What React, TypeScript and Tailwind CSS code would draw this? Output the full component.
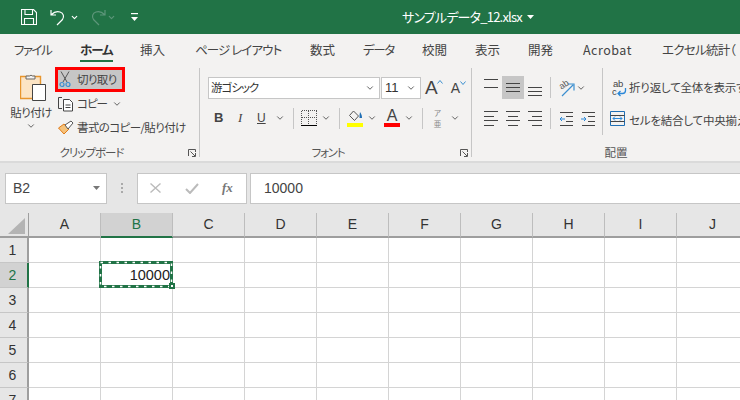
import { ChevronDown } from "lucide-react";

const TABS = [
  { label: "ファイル", cls: "ml-[14px] w-[37px] tracking-[-1.5px]" },
  { label: "ホーム", cls: "ml-[29px] w-[33px] tracking-[-1px]", active: true },
  { label: "挿入", cls: "ml-[27px] w-[25px]" },
  { label: "ページ レイアウト", cls: "ml-[30px] w-[85px] tracking-[-0.9px]" },
  { label: "数式", cls: "ml-[30px] w-[26px]" },
  { label: "データ", cls: "ml-[27px] w-[31px] tracking-[-1.300px]" },
  { label: "校閲", cls: "ml-[28px] w-[25px]" },
  { label: "表示", cls: "ml-[28px] w-[26px]" },
  { label: "開発", cls: "ml-[27px] w-[26px]" },
  { label: "Acrobat", cls: "ml-[29px] w-[50px] tracking-[0.5px]" },
  { label: "エクセル統計（", cls: "ml-[29px] tracking-[-0.7px]" },
];

const COLUMNS = ["A", "B", "C", "D", "E", "F", "G", "H", "I", "J"];
const ROWS = [1, 2, 3, 4, 5, 6, 7];

function Caret({ className = "" }: { className?: string }) {
  return <ChevronDown className={`h-[10px] w-[10px] shrink-0 text-[#444] ${className}`} strokeWidth={2} />;
}

function TitleBar() {
  return (
    <div className="flex h-[34px] items-center bg-[#217346] text-white">
      <svg className="ml-[21px] h-[16px] w-[16px]" viewBox="0 0 16 16" fill="none" stroke="white" strokeWidth="1.1">
        <path d="M.5.500h12l3 3v12H.500z" />
        <path d="M4 .500v5h7.500v-5M3.500 15.500v-6h9v6" />
      </svg>
      <svg className="ml-[13px] h-[17px] w-[16px]" viewBox="0 0 16 17" fill="none" stroke="white" strokeWidth="1.200">
        <path d="M1 1v5h5M1.500 5.500C4 3 7 2 10 3c3.500 1.200 4.500 4.500 2.500 7.500L7 16" />
      </svg>
      <ChevronDown className="ml-[4px] h-[9px] w-[9px]" strokeWidth={3} />
      <svg className="ml-[11px] h-[17px] w-[16px]" viewBox="0 0 16 17" fill="none" stroke="#5d967a" strokeWidth="1.200">
        <path d="M15 1v5h-5M14.500 5.500C12 3 9 2 6 3 2.500 4.200 1.500 7.500 3.500 10.500L9 16" />
      </svg>
      <ChevronDown className="ml-[1px] h-[9px] w-[9px] text-[#5d967a]" strokeWidth={3} />
      <svg className="ml-[14px] h-[10px] w-[9px]" viewBox="0 0 9 10" fill="white">
        <rect x="1" y="1" width="7" height="1.200" />
        <path d="M1 5h7L4.500 9z" />
      </svg>
      <div className="ml-[263px] flex items-center text-[13px] tracking-[-0.8px] [font-feature-settings:'palt']">
        <span>サンプルデータ_12.xlsx</span>
        <svg className="ml-[5px] h-[4px] w-[7px]" viewBox="0 0 7 4" fill="white">
          <path d="M0 0h7L3.500 4z" />
        </svg>
      </div>
    </div>
  );
}

function TabBar() {
  return (
    <div className="flex h-[34px] items-start overflow-hidden whitespace-nowrap pt-[6px] text-[12.5px] leading-[20px] text-[#444]">
      {TABS.map((tab) => (
        <div key={tab.label} className={`${tab.cls} relative h-[22px] shrink-0 ${tab.active ? "font-bold text-[#333]" : ""}`}>
          <span>{tab.label}</span>
          {tab.active && <div className="absolute bottom-0 left-0 right-0 h-[2px] bg-[#217346]" />}
        </div>
      ))}
    </div>
  );
}

function Launcher() {
  return (
    <svg className="h-[8px] w-[8px]" viewBox="0 0 8 8" fill="none" stroke="#555" strokeWidth="1">
      <path d="M.5 7V.5H7.5V3M2.500 2.500 7 7M7.500 4v3.500H4" />
    </svg>
  );
}

function GroupLabel({ text, className = "", launcher = true }: { text: string; className?: string; launcher?: boolean }) {
  return (
    <div className={`relative mt-auto flex h-[10px] items-center justify-center text-[11.5px] leading-[10px] text-[#555] ${className}`}>
      {text}
      {launcher && (
        <span className="absolute bottom-0 right-[3px] flex">
          <Launcher />
        </span>
      )}
    </div>
  );
}

function ClipboardGroup() {
  return (
    <div className="flex h-[89px] w-[200px] shrink-0 flex-col border-r border-[#c6c6c6]">
      <div className="flex">
        <div className="flex w-[55px] flex-col items-center pl-[7px] pt-[4px] text-[11.5px] text-[#444]">
          <svg className="ml-[4px] h-[30px] w-[26px]" viewBox="0 0 26 30" fill="none">
            <path d="M.5 4.500h20v22H.500z" fill="#fce4c4" stroke="#e8952c" strokeWidth="1.400" />
            <path d="M6 7V4h3.500a2 2 0 0 1 3 0H15v3z" fill="#f3f2f1" stroke="#666" />
            <path d="M12.500 12.500h13v16h-13z" fill="white" stroke="#444" />
          </svg>
          <span className="mt-[3px] leading-[14px] tracking-[-0.6px]">貼り付け</span>
          <Caret className="mt-[2px]" />
        </div>
        <div className="-mt-[1px] flex flex-col">
          <div className="flex h-[25px] w-[70px] items-center border-[3px] border-[#ff0000] bg-[#c6c6c6] pl-[1px] text-[11.5px] text-[#444]">
            <svg className="h-[17px] w-[12px]" viewBox="0 0 12 17" fill="none" stroke="#555" strokeWidth="1">
              <path d="M2 .5 8 11M10 .5 4 11" />
              <circle cx="3" cy="13.500" r="2" stroke="#3b8fd0" strokeWidth="1.200" />
              <circle cx="9" cy="13.500" r="2" stroke="#3b8fd0" strokeWidth="1.200" />
            </svg>
            <span className="ml-[6px] whitespace-nowrap tracking-[-0.6px]">切り取り</span>
          </div>
          <div className="flex h-[24px] items-center pl-[3px] text-[11.5px] text-[#444]">
            <svg className="h-[16px] w-[16px]" viewBox="0 0 16 16" fill="none" stroke="#444">
              <path d="M4 1.500H.5v11H4" />
              <path d="M5.500 3.500h6l3 3v8.500h-9z" fill="white" />
              <path d="M7.500 9h5M7.500 11.500h5" />
            </svg>
            <span className="ml-[3px] w-[35px] tracking-[-1px]">コピー</span>
            <Caret />
          </div>
          <div className="flex h-[24px] items-center whitespace-nowrap pl-[3px] text-[11.5px] text-[#444]">
            <svg className="h-[16px] w-[16px] shrink-0" viewBox="0 0 16 16" fill="none">
              <path d="M.5 8 6 4l5 5-5 5z" fill="#f5c27a" stroke="#e07b1a" />
              <path d="m7 5 6-4 2 2-5 6z" fill="#fff" stroke="#555" />
            </svg>
            <span className="ml-[3px] tracking-[-0.6px]">書式のコピー/貼り付け</span>
          </div>
        </div>
      </div>
      <GroupLabel text="クリップボード" className="pr-[16px] tracking-[-1px]" />
    </div>
  );
}

function FontGroup() {
  return (
    <div className="flex h-[89px] w-[272px] shrink-0 flex-col border-r border-[#c6c6c6] pl-[8px]">
      <div className="mt-[9px] flex h-[22px] items-center">
        <div className="flex h-[22px] w-[172px] items-center justify-between border border-[#c6c6c6] bg-white pl-[2px] pr-[4px] text-[11.5px] text-[#333]">
          <span className="tracking-[-1px]">游ゴシック</span>
          <Caret />
        </div>
        <div className="ml-[1px] flex h-[22px] w-[40px] items-center justify-between border border-[#c6c6c6] bg-white pl-[3px] pr-[4px] font-['Liberation_Sans'] text-[13px] text-[#333]">
          <span>11</span>
          <Caret />
        </div>
        <div className="ml-[4px] flex items-start font-['Liberation_Sans'] text-[#444]">
          <span className="text-[19px] leading-[22px]">A</span>
          <svg className="-ml-[1px] mt-[3px] h-[4px] w-[6px]" viewBox="0 0 6 4" fill="none" stroke="#3b8fd0">
            <path d="m.5 3.500 2.500-3 2.500 3" />
          </svg>
          <span className="ml-[8px] text-[14px] leading-[22px]">A</span>
          <svg className="mt-[4px] h-[4px] w-[6px]" viewBox="0 0 6 4" fill="none" stroke="#3b8fd0">
            <path d="m.5.500 2.500 3 2.500-3" />
          </svg>
        </div>
      </div>
      <div className="mt-[8px] flex h-[22px] items-center text-[#444]">
        <span className="ml-[6px] w-[12px] font-['Liberation_Sans'] text-[13px] font-bold">B</span>
        <span className="ml-[12px] w-[10px] font-['Liberation_Serif'] text-[13px] italic">I</span>
        <span className="ml-[9px] w-[11px] font-['Liberation_Sans'] text-[12px] underline">U</span>
        <Caret className="ml-[7px]" />
        <div className="ml-[8px] h-[21px] w-px bg-[#c6c6c6]" />
        <svg className="ml-[7px] h-[16px] w-[16px]" viewBox="0 0 16 16" fill="none" stroke="#555" strokeDasharray="1 1" shapeRendering="crispEdges">
          <path d="M.5.500h15M.5 7.500h15M.5.500v15M15.500.500v15M7.500 .500v15" />
          <path d="M0 15.500h16" stroke="#000" strokeDasharray="none" />
        </svg>
        <Caret className="ml-[4px]" />
        <div className="ml-[8px] h-[21px] w-px bg-[#c6c6c6]" />
        <div className="ml-[7px] flex w-[16px] flex-col items-center">
          <svg className="h-[12px] w-[15px]" viewBox="0 0 15 12" fill="none">
            <path d="m5.500 1 5 5-4 4.500-5-5z" stroke="#555" />
            <path d="M12 2c1.500 2 2 4 2 6h-2.500c0-2 0-4 .5-6z" fill="#1f6fb5" />
          </svg>
          <div className="mt-[1px] h-[4px] w-[16px] bg-[#ffff00]" />
        </div>
        <Caret className="ml-[4px]" />
        <div className="ml-[7px] flex w-[16px] flex-col items-center">
          <span className="h-[12px] font-['Liberation_Sans'] text-[16px] leading-[12px]">A</span>
          <div className="mt-[1px] h-[4px] w-[16px] bg-[#ff0000]" />
        </div>
        <Caret className="ml-[4px]" />
        <div className="ml-[8px] h-[21px] w-px bg-[#c6c6c6]" />
        <div className="ml-[10px] flex w-[9px] flex-col items-center text-[7.500px] leading-[11px] text-[#888]">
          <span>ア</span>
          <span>亜</span>
        </div>
        <Caret className="ml-[8px]" />
      </div>
      <GroupLabel text="フォント" className="pr-[23px] tracking-[-1.200px]" />
    </div>
  );
}

function Lines({
  widths,
  active = false,
  className = "",
  align = "items-center",
}: {
  widths: number[];
  active?: boolean;
  className?: string;
  align?: string;
}) {
  return (
    <div className={`flex h-[23px] w-[22px] flex-col px-[4px] ${align} ${active ? "bg-[#c6c6c6]" : ""} ${className}`}>
      {widths.map((w, i) => (
        <div key={i} className="h-px shrink-0 bg-[#444]" style={{ width: w }} />
      ))}
    </div>
  );
}

function AlignGroup() {
  return (
    <div className="flex h-[89px] w-[288px] shrink-0 flex-col">
      <div className="flex h-[67px] shrink-0">
        <div className="flex w-[131px] shrink-0 flex-col border-r border-[#c6c6c6]">
          <div className="mt-[8px] flex h-[23px] items-center">
            <div className="flex w-[78px] shrink-0 pl-[8px]">
              <Lines widths={[14, 14]} className="justify-start gap-[7px] pt-[3px]" />
              <Lines widths={[14, 14, 14]} active className="justify-center gap-[3px]" />
              <Lines widths={[14, 14, 14]} className="justify-end gap-[3px] pb-[3px]" />
            </div>
            <div className="h-[21px] w-px bg-[#c6c6c6]" />
            <svg className="ml-[7px] h-[18px] w-[17px]" viewBox="0 0 17 18" fill="none">
              <path d="M4 17 15 6M9.500 5H16v6.500" stroke="#3b8fd0" strokeWidth="1.200" />
              <text x="1" y="9" fontSize="9" fill="#555" fontFamily="Liberation Sans" transform="rotate(-35 5 6)">
                ab
              </text>
            </svg>
            <Caret className="ml-[1px]" />
          </div>
          <div className="mt-[8px] flex h-[23px] items-center">
            <div className="flex w-[78px] shrink-0 pl-[8px]">
              <Lines widths={[14, 10, 14, 10]} align="items-start" className="justify-center gap-[3.500px]" />
              <Lines widths={[14, 10, 14, 10]} className="justify-center gap-[3.500px]" />
              <Lines widths={[14, 10, 14, 10]} align="items-end" className="justify-center gap-[3.500px]" />
            </div>
            <div className="h-[21px] w-px bg-[#c6c6c6]" />
            <svg className="ml-[8px] h-[14px] w-[15px]" viewBox="0 0 15 14" fill="none">
              <path d="M1 .500h13M7 4.500h7M7 9.500h7M1 13.500h13" stroke="#444" />
              <path d="M6 7H1m2-2L1 7l2 2" stroke="#2b88d8" />
            </svg>
            <svg className="ml-[7px] h-[14px] w-[15px]" viewBox="0 0 15 14" fill="none">
              <path d="M1 .500h13M7 4.500h7M7 9.500h7M1 13.500h13" stroke="#444" />
              <path d="M0 7h5M3 5l2 2-2 2" stroke="#2b88d8" />
            </svg>
          </div>
        </div>
        <div className="flex min-w-0 flex-1 flex-col whitespace-nowrap text-[11.5px] tracking-[-0.2px] text-[#444]">
          <div className="mt-[8px] flex h-[23px] items-center pl-[9px]">
            <svg className="h-[18px] w-[15px] shrink-0" viewBox="0 0 15 18" fill="none">
              <text x="1" y="8" fontSize="9.500" fill="#444" fontFamily="Liberation Sans">
                ab
              </text>
              <text x="0" y="16" fontSize="9.500" fill="#444" fontFamily="Liberation Sans">
                c
              </text>
              <path d="M13.500 9v2.500a3 3 0 0 1-3 3H6.500M8.500 12l-2.500 2.500L8.500 17" stroke="#2b88d8" strokeWidth="1.300" />
            </svg>
            <span className="ml-[2px]">折り返して全体を表示する</span>
          </div>
          <div className="mt-[8px] flex h-[23px] items-center pl-[7px]">
            <svg className="h-[15px] w-[15px] shrink-0" viewBox="0 0 15 15" fill="none">
              <path d="M.500.500h14v14H.500z" stroke="#1f6fb5" />
              <path d="M.500 4.500h14M.500 10.500h14" stroke="#444" />
              <path d="M3 7.500h9M5 5.500l-2 2 2 2M10 5.500l2 2-2 2" stroke="#2b88d8" />
            </svg>
            <span className="ml-[4px] translate-y-[2px]">セルを結合して中央揃え</span>
          </div>
        </div>
      </div>
      <GroupLabel text="配置" launcher={false} />
    </div>
  );
}

function FormulaBar() {
  return (
    <div className="flex h-[52px] items-center border-t-2 border-[#dadada] bg-[#e6e6e6] pl-[5px]">
      <div className="flex h-[31px] w-[102px] items-center justify-between border border-[#c6c6c6] bg-white pl-[7px] pr-[6px] font-['Liberation_Sans'] text-[14px] text-[#444]">
        B2
        <svg className="h-[4px] w-[7px]" viewBox="0 0 7 4" fill="#777">
          <path d="M0 0h7L3.500 4z" />
        </svg>
      </div>
      <div className="ml-[14px] flex flex-col gap-[2px]">
        <div className="h-[2px] w-[2px] bg-[#aaa]" />
        <div className="h-[2px] w-[2px] bg-[#aaa]" />
        <div className="h-[2px] w-[2px] bg-[#aaa]" />
      </div>
      <div className="ml-[14px] flex h-[31px] w-[110px] items-center border border-[#c6c6c6] bg-white">
        <svg className="ml-[12px] h-[10px] w-[11px]" viewBox="0 0 11 10" fill="none" stroke="#bbb" strokeWidth="1.400">
          <path d="m.500.500 10 9M10.500.500l-10 9" />
        </svg>
        <svg className="ml-[24px] h-[11px] w-[14px]" viewBox="0 0 14 11" fill="none" stroke="#bbb" strokeWidth="2">
          <path d="m1 6 4 4 8-9" />
        </svg>
        <span className="ml-[23px] font-['Liberation_Serif'] text-[13px] font-bold italic text-[#777]">fx</span>
      </div>
      <div className="ml-[3px] flex h-[31px] flex-1 items-center border-y border-l border-[#c6c6c6] bg-white pl-[13px] font-['Liberation_Sans'] text-[14px] text-[#444]">
        10000
      </div>
    </div>
  );
}

function Sheet() {
  return (
    <div className="grid grid-cols-[29px_repeat(10,72px)] grid-rows-[25px_repeat(7,25px)] font-['Liberation_Sans'] text-[14px] text-[#333]">
      <div className="relative border-b-2 border-r border-[#9e9e9e] bg-[#e6e6e6]">
        <svg className="absolute bottom-[2px] right-[3px] h-[16px] w-[17px]" viewBox="0 0 17 16" fill="#b4b4b4">
          <path d="M17 0v16H0z" />
        </svg>
      </div>
      {COLUMNS.map((c) => (
        <div
          key={c}
          className={`flex items-center justify-center border-r border-[#bdbdbd] ${
            c === "B" ? "border-b-2 border-b-[#217346] bg-[#d2d2d2] text-[#217346]" : "border-b-2 border-b-[#9e9e9e] bg-[#e6e6e6]"
          }`}
        >
          {c}
        </div>
      ))}
      {ROWS.map((r) => (
        <Row key={r} row={r} />
      ))}
    </div>
  );
}

function Row({ row }: { row: number }) {
  const active = row === 2;
  return (
    <>
      <div
        className={`flex items-center justify-center border-b border-[#c6c6c6] pr-[2px] ${
          active ? "border-r-2 border-r-[#217346] bg-[#d2d2d2] text-[#217346]" : "border-r-2 border-r-[#9e9e9e] bg-[#e6e6e6]"
        }`}
      >
        {row}
      </div>
      {COLUMNS.map((c) =>
        active && c === "B" ? (
          <div key={c} className="relative flex items-center justify-end bg-white pr-[3px] text-[14.500px] text-[#222]">
            10000
            <div className="absolute -left-[2px] -top-[2px] bottom-0 right-0 border-[3px] border-[#217346]" />
            <svg className="absolute -left-[2px] -top-[2px] h-[27px] w-[74px]" viewBox="0 0 74 27" fill="none">
              <rect x="1.500" y="1.500" width="71" height="24" stroke="white" strokeWidth="1.500" strokeDasharray="2.500 5.500" />
            </svg>
            <div className="absolute -bottom-[1px] -right-[2px] h-[6px] w-[6px] border-2 border-[#217346] bg-white" />
          </div>
        ) : (
          <div key={c} className="border-b border-r border-[#d4d4d4] bg-white" />
        ),
      )}
    </>
  );
}

export default function App() {
  return (
    <div className="h-[400px] w-[740px] overflow-hidden bg-white font-['Noto_Sans_CJK_JP',sans-serif]">
      <TitleBar />
      <div className="bg-[#f3f2f1] [font-feature-settings:'palt']">
        <TabBar />
        <div className="flex">
          <ClipboardGroup />
          <FontGroup />
          <AlignGroup />
        </div>
        <div className="h-[4px]" />
      </div>
      <FormulaBar />
      <Sheet />
    </div>
  );
}
